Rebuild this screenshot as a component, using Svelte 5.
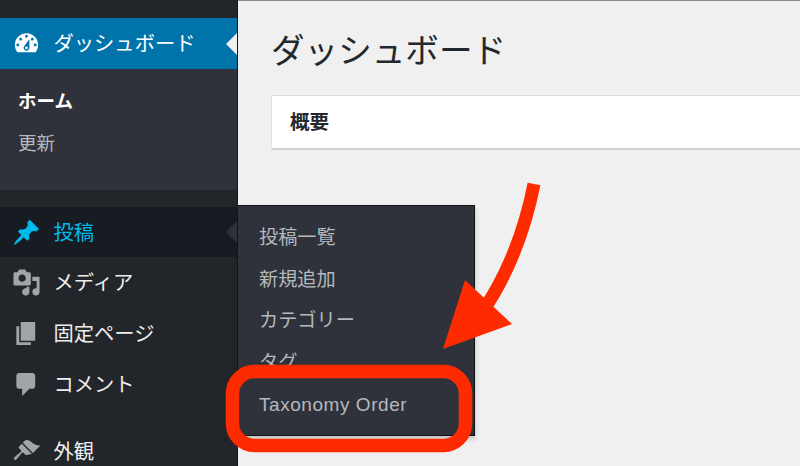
<script>
  const icons = {
    media: 'M13 11V4c0-.55-.45-1-1-1h-1.67L9 1H5L3.67 3H2c-.55 0-1 .45-1 1v7c0 .55.45 1 1 1h10c.55 0 1-.45 1-1zM7 4.5c1.38 0 2.5 1.12 2.5 2.5S8.38 9.5 7 9.5 4.5 8.38 4.5 7 5.62 4.5 7 4.5zM14 6h5v10.5c0 1.38-1.12 2.5-2.5 2.5S14 17.88 14 16.5s1.12-2.5 2.5-2.5c.17 0 .34.02.5.05V9h-3V6zm-4 8.05V13h2v3.5c0 1.38-1.12 2.5-2.5 2.5S7 17.88 7 16.5 8.12 14 9.5 14c.17 0 .34.02.5.05z',
    page: 'M6 15V2h10v13H6zm-1 1h8v2H3V5h2v11z',
    comment: 'M5 2h9c1.1 0 2 .9 2 2v7c0 1.1-.9 2-2 2h-2l-5 5v-5H5c-1.1 0-2-.9-2-2V4c0-1.1.9-2 2-2z',
    brush: 'M14.48 11.06L7.41 3.99l1.5-1.5c.5-.56 2.3-.47 3.51.32 1.21.8 1.43 1.28 2.91 2.1 1.18.64 2.45 1.26 4.45.85zm-.71.71L6.7 4.7 4.93 6.47c-.39.39-.39 1.02 0 1.41l1.06 1.06c.39.39.39 1.03 0 1.42-.6.6-3.4 2.67-3.4 2.67-.67.65-1.77 1.9-1.1 2.57.68.67 1.92-.43 2.57-1.1 0 0 2.07-2.8 2.67-3.4.39-.39 1.03-.39 1.42 0l1.06 1.06c.39.39 1.02.39 1.41 0z'
  };
  const items = [
    { label: 'メディア', icon: icons.media, cls: 'a' },
    { label: '固定ページ', icon: icons.page, cls: 'a' },
    { label: 'コメント', icon: icons.comment, cls: 'a' },
    { label: '外観', icon: icons.brush, cls: 'b' }
  ];
  const fly = ['投稿一覧', '新規追加', 'カテゴリー', 'タグ', 'Taxonomy Order'];
</script>

<div class="page">
  <aside class="side">
    <div class="current">
      <svg class="ic" viewBox="0 0 20 20"><path fill="#fff" d="M3.76 16h12.48c1.1-1.37 1.76-3.11 1.76-5 0-4.42-3.58-8-8-8s-8 3.58-8 8c0 1.89.66 3.63 1.76 5zM10 4c.55 0 1 .45 1 1s-.45 1-1 1-1-.45-1-1 .45-1 1-1zM6 6c.55 0 1 .45 1 1s-.45 1-1 1-1-.45-1-1 .45-1 1-1zm8 0c.55 0 1 .45 1 1s-.45 1-1 1-1-.45-1-1 .45-1 1-1zm-5.37 5.55L12 7v6c0 1.1-.9 2-2 2s-2-.9-2-2c0-.57.24-1.08.63-1.45zM4 10c.55 0 1 .45 1 1s-.45 1-1 1-1-.45-1-1 .45-1 1-1zm12 0c.55 0 1 .45 1 1s-.45 1-1 1-1-.45-1-1 .45-1 1-1zm-5 3c0-.55-.45-1-1-1s-1 .45-1 1 .45 1 1 1 1-.45 1-1z"/></svg>
      <span class="t">ダッシュボード</span>
      <i class="notch"></i>
    </div>
    <div class="sub">
      <div class="home">ホーム</div>
      <div class="upd">更新</div>
    </div>
    <div class="post">
      <svg class="ic" viewBox="0 0 20 20"><path fill="#00b9eb" d="M10.44 3.02l1.82-1.82 6.36 6.35-1.83 1.82c-1.05-.68-2.48-.57-3.41.36l-.75.75c-.92.93-1.04 2.35-.35 3.41l-1.83 1.82-2.41-2.41-2.8 2.79c-.42.42-3.38 2.71-3.8 2.29s1.86-3.39 2.28-3.81l2.79-2.79L4.1 9.36l1.83-1.82c1.05.69 2.48.57 3.41-.36l.75-.75c.93-.92 1.04-2.35.35-3.41z"/></svg>
      <span class="t">投稿</span>
      <i class="notch dark"></i>
    </div>
    {#each items as it}
      <div class="row {it.cls}">
        <svg class="ic" viewBox="0 0 20 20"><path fill="#a0a5aa" d={it.icon}/></svg>
        <span class="t">{it.label}</span>
      </div>
    {/each}
  </aside>

  <main class="main">
    <h1>ダッシュボード</h1>
    <div class="box">概要</div>
  </main>

  <nav class="fly">
    {#each fly as f}
      <div class="fi">{f}</div>
    {/each}
  </nav>

  <svg class="mark" viewBox="0 0 800 466" aria-hidden="true">
    <path d="M534 184 C523 240 502 284 482 312" fill="none" stroke="#fe2a00" stroke-width="13"/>
    <path d="M465 280 L512 324 L443 349 Z" fill="#fe2a00"/>
    <rect x="232.5" y="371.5" width="233" height="74" rx="22" fill="none" stroke="#fe2a00" stroke-width="13.5"/>
  </svg>
</div>

<style>
  :global(body) { margin: 0; }
  .page {
    position: relative;
    width: 800px;
    height: 466px;
    overflow: hidden;
    display: flex;
    background: #f0f0f0;
    font-family: "Noto Sans CJK JP", sans-serif;
  }
  .side {
    width: 238px;
    flex: none;
    padding-top: 18px;
    box-sizing: border-box;
    background: #22262b;
    border-right: 1px solid #15181b;
  }
  .ic { width: 29px; height: 29px; flex: none; }
  .t { position: relative; top: -1.5px; }
  .current, .post, .row {
    position: relative;
    display: flex;
    align-items: center;
    gap: 12.5px;
    padding-left: 12px;
    font-size: 20.3px;
  }
  .current { height: 51px; background: #0073aa; color: #fff; }
  .notch {
    position: absolute;
    right: 0;
    top: 50%;
    margin-top: -11px;
    border: 11px solid transparent;
    border-right-color: #f0f0f0;
    border-left: 0;
  }
  .notch.dark { border-right-color: #2f323a; }
  .sub {
    height: 121px;
    box-sizing: border-box;
    padding: 17px 0 0 18px;
    background: #2f323a;
    font-size: 18.5px;
    line-height: 28px;
  }
  .home { color: #fff; font-weight: 700; }
  .upd { margin-top: 14px; color: #b4b9be; }
  .post { height: 50px; margin-top: 17px; background: #171c22; color: #00b9eb; }
  .row { height: 51px; color: #eee; }
  .row.b { margin-top: 16px; }
  .main { flex: 1; min-width: 0; padding-left: 33px; border-top: 1px solid #8a8a8a; }
  h1 {
    margin: 23px 0 0;
    height: 50px;
    font-size: 33.6px;
    line-height: 50px;
    font-weight: 400;
    color: #23282d;
  }
  .box {
    margin-top: 21px;
    height: 55px;
    box-sizing: border-box;
    padding: 0 0 3px 18px;
    display: flex;
    align-items: center;
    background: #fff;
    border-top: 1px solid #dcdcdc;
    border-left: 1px solid #e2e2e2;
    border-bottom: 2px solid #d2d2d2;
    font-size: 19.5px;
    font-weight: 700;
    color: #23282d;
  }
  .fly {
    position: absolute;
    left: 238px;
    top: 205px;
    width: 237px;
    height: 231px;
    box-sizing: border-box;
    padding: 10px 0 0 21px;
    background: #2f323a;
    border-top: 1px solid #111;
    border-right: 1px solid #111;
    border-bottom: 1px solid #111;
    box-shadow: 0 3px 5px rgba(0, 0, 0, 0.2);
    font-size: 19.2px;
    color: #b4b9be;
  }
  .fi { height: 41.5px; line-height: 41.5px; white-space: nowrap; }
  .fi:last-child {
    font-family: "Liberation Sans", sans-serif;
    font-size: 19px;
    letter-spacing: 0.55px;
    padding-top: 2px;
  }
  .mark { position: absolute; left: 0; top: 0; width: 800px; height: 466px; pointer-events: none; }
</style>
